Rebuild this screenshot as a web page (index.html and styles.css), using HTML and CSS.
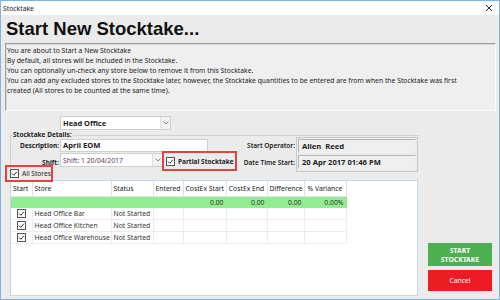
FILE: index.html
```html
<!doctype html>
<html lang="en">
	<head>
		<meta charset="UTF-8" />
		<title>Stocktake</title>
		<link rel="stylesheet" href="styles.css">
	</head>
	<body>
		<div class="window">
			<div class="titlebar">
				<span>Stocktake</span>
				<svg class="close" width="8" height="8" viewBox="0 0 8 8"><path d="M1 1L7 7M7 1L1 7" stroke="#333" stroke-width="1"/></svg>
			</div>

			<div class="dialog">
				<h1>Start New Stocktake...</h1>

				<div class="info">
					<div>You are about to Start a New Stocktake</div>
					<div>By default, all stores will be included in the Stocktake.</div>
					<div>You can optionally un-check any store below to remove it from this Stocktake.</div>
					<div>You can add any excluded stores to the Stocktake later, however, the Stocktake quantities to be entered are from when the Stocktake was first</div>
					<div>created (All stores to be counted at the same time).</div>
				</div>

				<div class="store-row">
					<div class="combo store-combo">
						<span>Head Office</span>
						<span class="arrow"><svg width="6" height="4" viewBox="0 0 6 4"><path d="M0.5 0.5L3 3L5.5 0.5" fill="none" stroke="#777" stroke-width="0.9"/></svg></span>
					</div>
				</div>

				<fieldset class="details">
					<legend>Stocktake Details:</legend>
					<div class="details-grid">
						<div class="lbl">Description:</div>
						<div class="textbox">April EOM</div>
						<div class="lbl lbl-op">Start Operator:</div>
						<div class="op-panel">
							<div class="op-value">Allen&nbsp; Reed</div>
							<div class="op-value">20 Apr 2017 01:46 PM</div>
						</div>

						<div class="lbl">Shift:</div>
						<div class="combo shift-combo">
							<span>Shift: 1 20/04/2017</span>
							<span class="arrow"><svg width="6" height="4" viewBox="0 0 6 4"><path d="M0.5 0.5L3 3L5.5 0.5" fill="none" stroke="#777" stroke-width="0.9"/></svg></span>
						</div>
						<label class="partial highlight">
							<svg class="check" width="9" height="9" viewBox="0 0 9 9"><rect x="0.5" y="0.5" width="8" height="8" fill="#fff" stroke="#555"/><path d="M2 4.5L3.8 6.3L7 2.6" fill="none" stroke="#333" stroke-width="1"/></svg>
							<span>Partial Stocktake</span>
						</label>
						<div class="lbl lbl-date">Date Time Start:</div>
					</div>
				</fieldset>

				<label class="all-stores highlight">
					<svg class="check" width="9" height="9" viewBox="0 0 9 9"><rect x="0.5" y="0.5" width="8" height="8" fill="#fff" stroke="#555"/><path d="M2 4.5L3.8 6.3L7 2.6" fill="none" stroke="#333" stroke-width="1"/></svg>
					<span>All Stores</span>
				</label>

				<div class="main">
					<div class="grid-wrap">
						<table class="grid">
							<colgroup>
								<col style="width:21px"><col style="width:79px"><col style="width:42px"><col style="width:30px">
								<col style="width:43px"><col style="width:41px"><col style="width:37px"><col style="width:42px">
							</colgroup>
							<thead>
								<tr>
									<th class="left">Start</th>
									<th class="left">Store</th>
									<th class="left">Status</th>
									<th>Entered</th>
									<th>CostEx Start</th>
									<th>CostEx End</th>
									<th>Difference</th>
									<th>% Variance</th>
								</tr>
							</thead>
							<tbody>
								<tr class="totals">
									<td></td><td></td><td></td><td></td>
									<td>0.00</td><td>0.00</td><td>0.00</td><td>0.00%</td>
								</tr>
								<tr>
									<td class="cb"><svg width="9" height="9" viewBox="0 0 9 9"><rect x="0.5" y="0.5" width="8" height="8" fill="#fff" stroke="#555"/><path d="M2 4.5L3.8 6.3L7 2.6" fill="none" stroke="#333" stroke-width="1"/></svg></td>
									<td class="left">Head Office Bar</td><td class="left">Not Started</td><td></td><td></td><td></td><td></td><td></td>
								</tr>
								<tr>
									<td class="cb"><svg width="9" height="9" viewBox="0 0 9 9"><rect x="0.5" y="0.5" width="8" height="8" fill="#fff" stroke="#555"/><path d="M2 4.5L3.8 6.3L7 2.6" fill="none" stroke="#333" stroke-width="1"/></svg></td>
									<td class="left">Head Office Kitchen</td><td class="left">Not Started</td><td></td><td></td><td></td><td></td><td></td>
								</tr>
								<tr>
									<td class="cb"><svg width="9" height="9" viewBox="0 0 9 9"><rect x="0.5" y="0.5" width="8" height="8" fill="#fff" stroke="#555"/><path d="M2 4.5L3.8 6.3L7 2.6" fill="none" stroke="#333" stroke-width="1"/></svg></td>
									<td class="left">Head Office Warehouse</td><td class="left">Not Started</td><td></td><td></td><td></td><td></td><td></td>
								</tr>
							</tbody>
						</table>
					</div>

					<div class="actions">
						<button type="button" class="btn btn-start">START<br>STOCKTAKE</button>
						<button type="button" class="btn btn-cancel">Cancel</button>
					</div>
				</div>
			</div>
		</div>
	</body>
</html>
```

FILE: styles.css
```css
html,
body {
	margin: 0;
	padding: 0;
}

body {
	font-family: "Noto Sans", "Open Sans", sans-serif;
	font-size: 6.8px;
	color: #222;
	background: #fff;
}

.window {
	width: 500px;
	height: 300px;
	box-sizing: border-box;
	border: 1px solid #7fb2e6;
	display: flex;
	flex-direction: column;
	background: #ebebeb;
	overflow: hidden;
}

.titlebar {
	height: 14px;
	flex: none;
	background: #fff;
	display: flex;
	align-items: center;
	justify-content: space-between;
	padding: 0 6px 0 2px;
}

.dialog {
	flex: 1;
	display: flex;
	flex-direction: column;
	padding: 0 3px 0 4px;
	min-height: 0;
}

h1 {
	font-family: "Liberation Sans", Arial, sans-serif;
	font-size: 18.5px;
	font-weight: bold;
	line-height: 21px;
	height: 25px;
	margin: 0;
	padding: 3px 0 0 1px;
	color: #111;
	flex: none;
}

/* sunken read-only text box */
.info {
	box-sizing: border-box;
	height: 68px;
	flex: none;
	padding: 2px 1px;
	line-height: 10px;
	background: #efefef;
	border-top: 1px solid #a0a0a0;
	border-left: 1px solid #a0a0a0;
	border-right: 1px solid #fafafa;
	border-bottom: 1px solid #fafafa;
	box-shadow: inset 1px 1px 0 #d8d8d8;
	white-space: nowrap;
}

.store-row {
	margin: 5px 0 0 55px;
	flex: none;
}

.combo {
	box-sizing: border-box;
	height: 14px;
	background: #fff;
	border: 1px solid #cfcfcf;
	display: flex;
	align-items: center;
	padding-left: 2px;
}

.combo span:first-child {
	flex: 1;
}

.combo .arrow {
	width: 9px;
	height: 12px;
	display: flex;
	align-items: center;
	justify-content: center;
	background: #f2f2f2;
	border-left: 1px solid #e2e2e2;
}

.store-combo {
	width: 111px;
	font-weight: bold;
	font-size: 7.4px;
}

/* Stocktake Details group */
.details {
	margin: 1px 0 0 5px;
	padding: 0;
	width: 408px;
	border: 0;
	border-top: 1px solid #d2d2d2;
	border-left: 1px solid #d2d2d2;
	flex: none;
}

.details legend {
	font-weight: bold;
	font-size: 6.5px;
	padding: 0 1px;
	margin-left: 1px;
	line-height: 8px;
}

.details-grid {
	display: grid;
	grid-template-columns: 49px 102px 76px 58px 122px;
	grid-template-rows: 15px 18px;
	align-items: center;
	margin-top: -1px;
}

.lbl {
	text-align: right;
	font-weight: bold;
	font-size: 6.5px;
	padding-right: 1px;
	white-space: nowrap;
}

.lbl-op,
.lbl-date {
	grid-column: 4;
	justify-self: end;
	font-weight: 600;
	padding-right: 1px;
}

.lbl-op {
	grid-row: 1;
}

.lbl-date {
	grid-row: 2;
}

.textbox {
	grid-column: 2 / 4;
	box-sizing: border-box;
	width: 148px;
	height: 13px;
	background: #fff;
	border: 1px solid #cfcfcf;
	font-weight: bold;
	font-size: 7.6px;
	line-height: 11px;
	padding-left: 2px;
}

.shift-combo {
	width: 103px;
	color: #5a3a5c;
	align-self: start;
}

.highlight {
	box-sizing: border-box;
	border: 2px solid #e5433f;
	display: flex;
	align-items: center;
	gap: 3px;
	white-space: nowrap;
}

.partial {
	width: 75px;
	height: 20px;
	margin-top: -2px;
	padding-left: 2px;
	font-weight: bold;
	font-size: 6.5px;
}

.check {
	flex: none;
}

.op-panel {
	grid-column: 5;
	grid-row: 1 / 3;
	box-sizing: border-box;
	height: 35px;
	align-self: start;
	margin-top: -1px;
	border: 1px solid #c9c9c9;
	padding: 1px 1px 0 1px;
	display: flex;
	flex-direction: column;
	gap: 2px;
}

.op-value {
	box-sizing: border-box;
	height: 14px;
	background: #efefef;
	border: 1px solid #b4b4b4;
	border-right-color: #eee;
	border-bottom-color: #eee;
	font-weight: bold;
	font-size: 7.6px;
	line-height: 12px;
	padding-left: 3px;
}

.all-stores {
	width: 48px;
	height: 17px;
	margin-top: -6px;
	padding-left: 3px;
	flex: none;
	position: relative;
	font-size: 6.6px;
}

.main {
	flex: 1;
	display: flex;
	margin: -2px 0 0 5px;
	padding-bottom: 3px;
	min-height: 0;
}

.grid-wrap {
	width: 408px;
	box-sizing: border-box;
	background: #fff;
	border: 1px solid #c3d7ee;
	flex: none;
}

.grid {
	border-collapse: collapse;
	table-layout: fixed;
	width: 335px;
	font-size: 6.8px;
}

.grid th {
	height: 15px;
	font-weight: normal;
	border: 1px solid #e2e2e2;
	border-top: 0;
	padding: 0 2px;
	text-align: center;
	white-space: nowrap;
	overflow: hidden;
}

.grid td {
	height: 11px;
	border: 1px solid #ececec;
	padding: 0 2px;
	text-align: right;
	white-space: nowrap;
	overflow: hidden;
	color: #333;
}

.grid th:first-child,
.grid td:first-child {
	border-left: 0;
}

.grid .left {
	text-align: left;
}

.grid .cb {
	text-align: center;
	padding: 0;
}

.grid .cb svg {
	display: block;
	margin: 0 auto;
}

.grid .totals td {
	background: #90ee90;
	border-color: #90ee90;
	height: 10px;
}

.actions {
	flex: 1;
	display: flex;
	flex-direction: column;
	justify-content: flex-end;
	gap: 4px;
	padding: 0 0 5px 10px;
}

.btn {
	width: 64px;
	border: 0;
	color: #fff;
	font-family: "Noto Sans", "Open Sans", sans-serif;
	font-size: 6.8px;
	line-height: 9px;
	padding: 0;
}

.btn-start {
	height: 23px;
	background: #4caf50;
	font-weight: bold;
}

.btn-cancel {
	height: 21px;
	background: #ed1c24;
}
```
